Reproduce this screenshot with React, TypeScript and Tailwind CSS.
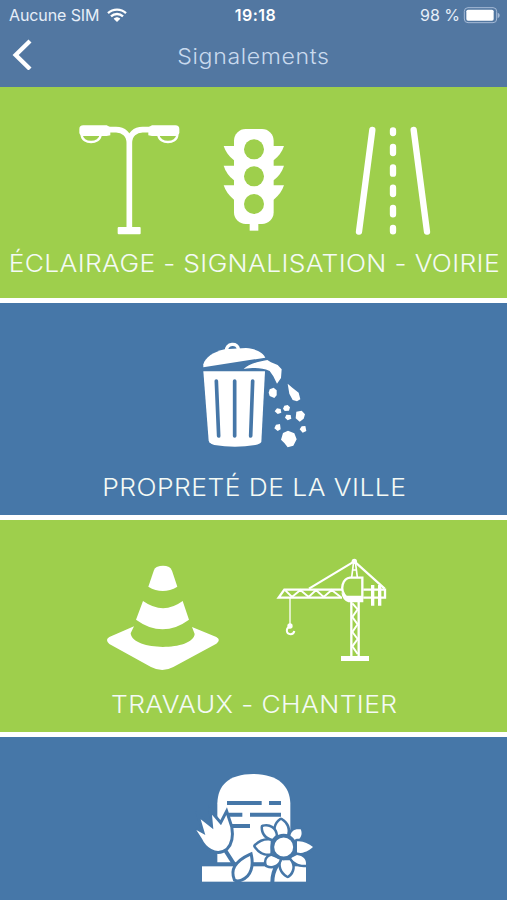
import React from 'react';

function WifiIcon() {
  return (
    <svg className="h-[15px] w-[20px]" viewBox="0 0 60 45" fill="none" stroke="#fff" strokeWidth="7">
      <path d="M3 15.500C18 1.500 42 1.500 57 15.500" />
      <path d="M12 25C22 15.500 38 15.500 48 25" />
      <path d="M20 32.500C26 26.500 34 26.500 40 32.500L30 42Z" fill="#fff" stroke="none" />
    </svg>
  );
}

function BatteryIcon() {
  return (
    <svg className="h-[18px] w-[38px]" viewBox="0 0 114 54">
      <rect x="4" y="5" width="97" height="45" rx="11" fill="none" stroke="#a5bad6" strokeWidth="3" />
      <rect x="10" y="11" width="82" height="33" rx="5" fill="#fff" />
      <path d="M104 20c8 2 8 14 0 16z" fill="#a5bad6" />
    </svg>
  );
}

function StreetLampIcon() {
  return (
    <svg className="h-[130px] w-[120px]" viewBox="0 0 360 390">
      <g fill="none" stroke="#fff">
        <path d="M178 345V84C178 58 160 44 138 44H114M178 84C178 58 196 44 218 44H242" strokeWidth="17" />
        <path d="M35 60C36 88 90 88 92 60M265 60C267 88 321 88 322 60" strokeWidth="7" />
      </g>
      <path d="M40 31H110L121 37V61L110 63H40Q28 63 28 52V42Q28 31 40 31Z" fill="#fff" />
      <path d="M316 31H246L235 37V61L246 63H316Q328 63 328 52V42Q328 31 316 31Z" fill="#fff" />
      <rect x="143" y="336" width="69" height="22" rx="3" fill="#fff" />
    </svg>
  );
}

function TrafficLightIcon() {
  return (
    <svg className="h-[130px] w-[90px]" viewBox="0 0 270 390" fill="#fff">
      <rect x="72" y="42" width="119" height="285" rx="35" />
      <path d="M41 93H222Q214 118 191 136H72Q49 118 41 93Z" />
      <path d="M41 152H222Q214 178 191 196H72Q49 178 41 152Z" />
      <path d="M41 211H222Q214 236 191 254H72Q49 236 41 211Z" />
      <rect x="119" y="320" width="26" height="27" />
      <g fill="#9ecf4c">
        <circle cx="132" cy="103" r="30" />
        <circle cx="132" cy="184" r="30" />
        <circle cx="132" cy="267" r="30" />
      </g>
    </svg>
  );
}

function RoadIcon() {
  return (
    <svg className="h-[130px] w-[100px]" viewBox="0 0 300 390" fill="none" stroke="#fff" strokeLinecap="round">
      <path d="M82 45L42 350M206 45L246 350" strokeWidth="19" />
      <path d="M144 46V54M144 96V114M144 157V176M144 218V237M144 279V298M144 339V349" strokeWidth="19" />
    </svg>
  );
}

function TrashIcon() {
  return (
    <svg className="h-[120px] w-[125px]" viewBox="0 0 375 360" fill="#fff">
      <path d="M37 97V88C42 68 68 50 101 43L165 39C198 42 216 53 223 68Z" />
      <path d="M106 50C102 24 143 20 142 45" fill="none" stroke="#fff" strokeWidth="10" />
      <path d="M37 109H222L211 321Q207 327 193 330Q132 340 70 330Q56 326 53 317Z" />
      <g stroke="#4677a8" strokeWidth="11" strokeLinecap="round">
        <path d="M76 138L83 303M131 138V303M185 138L179 303" />
      </g>
      <path d="M158 102C172 88 195 81 229 75L240 82L260 90L272 103L270 129L258 146L247 124L236 108C211 97 188 98 158 102Z" />
      <path d="M236 163L248 158L257 166L257 181L250 189L236 183L233 173Z" />
      <path d="M290 146L304 158L323 173L328 193L318 199L305 195L295 176Z" />
      <path d="M280 212L290 210L297 217L294 227L281 228L276 221Z" />
      <path d="M258 220L269 222L271 233L260 237L251 229Z" />
      <path d="M286 239L299 240L301 251L290 256L282 248Z" />
      <path d="M316 230L332 227L342 238L338 251L326 260L314 250Z" />
      <path d="M255 269L267 267L269 283L260 288L250 280Z" />
      <path d="M332 274L343 273L346 288L335 293L326 283Z" />
      <path d="M276 294L291 287L310 295L317 313L307 332L290 337L280 324L270 314Z" />
    </svg>
  );
}

function ConeIcon() {
  return (
    <svg className="h-[120px] w-[125px]" viewBox="0 0 375 360" fill="#fff">
      <path d="M170 36Q190 29 207 36Q213 39 216 47L232 95Q188 121 145 95L162 45Q165 39 170 36Z" />
      <path d="M129 138Q190 181 248 138L267 194Q188 252 108 194Z" />
      <path d="M102 214L28 246Q14 254 28 267L153 336Q187 354 220 336L349 266Q364 254 349 246L276 216L284 237C280 288 98 290 92 235Z" />
    </svg>
  );
}

function CraneIcon() {
  return (
    <svg className="h-[120px] w-[125px]" viewBox="0 0 375 360" fill="none" stroke="#fff">
      <path d="M117 116L253 34L344 116" strokeWidth="6.500" strokeLinejoin="round" />
      <path d="M216 143H26L43 119H216M280 119H345V143H280" strokeWidth="7" />
      <path d="M46 121L66 141L91 120L116 141L138 120L161 141L185 120L212 141" strokeWidth="6" />
      <path d="M308 105V167M329 105V167" strokeWidth="10" />
      <path d="M251 35L245 82M256 35L262 82M249 60H260" strokeWidth="5" />
      <circle cx="253" cy="34" r="8" fill="#fff" stroke="none" />
      <path d="M277 83V141H229C218 130 214 119 218 104Q224 84 240 83Z" strokeWidth="7" />
      <path d="M214 127L233 142H280V157H235Q217 151 214 127Z" fill="#fff" stroke="none" />
      <path d="M244 156V320M266 156V320" strokeWidth="7" />
      <path d="M247 160L263 178L247 201L263 223L247 246L263 267L247 289L263 312" strokeWidth="6" />
      <rect x="213" y="318" width="84" height="15" fill="#fff" stroke="none" />
      <path d="M60 144V224" strokeWidth="4" />
      <circle cx="60" cy="228" r="8" fill="#fff" stroke="none" />
      <path d="M60 231C47 233 47 252 62 253Q71 252 73 243" strokeWidth="6" />
    </svg>
  );
}

function CemeteryIcon() {
  return (
    <svg className="h-[125px] w-[130px]" viewBox="0 0 390 375" fill="#fff">
      <path d="M82 292V115C84 60 115 28 190 27C266 28 299 63 301 115V292Z" />
      <rect x="36" y="304" width="312" height="46" />
      <path d="M111 114H215M237 114H273M115 149H157M180 149H273M115 183H180" stroke="#4677a8" strokeWidth="12" />
      <path d="M105 255L135 302" stroke="#4677a8" strokeWidth="12" />
      {/* tulip */}
      <path
        d="M19 195L46 210L32 163L70 193L66 149L93 181L109 150L121 187Q128 229 108 249Q88 265 64 252Q45 241 36 221Z"
        stroke="#4677a8"
        strokeWidth="18"
        paintOrder="stroke"
      />
      {/* leaf */}
      <path
        d="M180 273C186 301 180 331 153 341Q143 345 137 342Q129 322 138 306Q151 286 180 273Z"
        stroke="#4677a8"
        strokeWidth="18"
        paintOrder="stroke"
      />
      <path d="M191 298H242" fill="none" stroke="#4677a8" strokeWidth="9" />
      {/* daisy */}
      <path d="M262 300Q247 322 247 352" fill="none" stroke="#4677a8" strokeWidth="12" />
      <g stroke="#4677a8" strokeWidth="15" strokeLinejoin="round" paintOrder="stroke">
        <path d="M261 213C253 194 257 176 273 165C290 176 297 193 290 212Z" />
        <path d="M301 214C302 198 314 190 332 193C339 208 332 222 318 230Z" />
        <path d="M321 229C339 227 355 235 369 246C356 258 339 266 321 264Z" />
        <path d="M321 270C339 273 349 281 348 299C329 302 311 292 303 279Z" />
        <path d="M299 286C311 299 310 320 293 332C275 322 268 302 275 286Z" />
        <path d="M269 283C266 298 249 308 231 300C226 287 231 277 244 273Z" />
        <path d="M241 265C222 268 209 260 197 243C210 230 225 224 242 227Z" />
        <path d="M247 221C229 217 219 204 219 186C239 180 255 193 257 211Z" />
      </g>
      <circle cx="281" cy="246" r="34" stroke="#4677a8" strokeWidth="11" />
    </svg>
  );
}

interface LabelProps {
  children: React.ReactNode;
  className?: string;
}

function Label({ children, className = '' }: LabelProps) {
  return (
    <h2 className={`flex h-9 items-center justify-center whitespace-nowrap pt-[2px] text-[24px] font-light leading-9 text-[#f4faf5] ${className}`}>
      <span className="scale-x-110">{children}</span>
    </h2>
  );
}

function App() {
  return (
    <div className="h-[900px] w-full overflow-hidden bg-white font-[Inter,sans-serif]">
      <header className="h-[87px] bg-[#5277a1]">
        <div className="grid h-[30px] grid-cols-3 items-center text-[16px] leading-[30px] text-[#e6eef8]">
          <div className="flex items-center gap-2 pl-[9px]">
            <span className="whitespace-nowrap tracking-[-0.1px]">Aucune SIM</span>
            <WifiIcon />
          </div>
          <span className="pl-[4px] text-center font-semibold tracking-[0.5px] text-white">19:18</span>
          <div className="flex items-center justify-end gap-[3px] pr-[6px]">
            <span className="whitespace-nowrap">98 %</span>
            <BatteryIcon />
          </div>
        </div>
        <div className="grid h-[53px] grid-cols-[60px_1fr_60px] items-center">
          <button aria-label="Retour" className="pb-[5px] pl-[12px]">
            <svg className="h-[32px] w-[21px]" viewBox="0 0 63 96" fill="none" stroke="#fff" strokeWidth="13">
              <path d="M54 9L11 51L54 93" />
            </svg>
          </button>
          <h1 className="text-center text-[22px] font-light text-[#c9daee]">
            <span className="inline-block scale-x-105 tracking-[0.6px]">Signalements</span>
          </h1>
        </div>
      </header>

      <main className="flex flex-col gap-[5px]">
        <section className="h-[211px] bg-[#9ecf4c] pt-7">
          <div className="flex pl-[70px]">
            <StreetLampIcon />
            <div className="ml-5">
              <TrafficLightIcon />
            </div>
            <div className="ml-[45px]">
              <RoadIcon />
            </div>
          </div>
          <Label className="pl-[2px] tracking-[0.32px]">ÉCLAIRAGE - SIGNALISATION - VOIRIE</Label>
        </section>

        <section className="h-[212px] bg-[#4677a8] pt-8">
          <div className="flex h-[134px] justify-center">
            <TrashIcon />
          </div>
          <Label className="pl-[2px] tracking-[0.43px]">PROPRETÉ DE LA VILLE</Label>
        </section>

        <section className="h-[212px] bg-[#9ecf4c] pt-[30px]">
          <div className="flex h-[136px] gap-[45px] pl-[100px]">
            <div className="pt-[5px]">
              <ConeIcon />
            </div>
            <CraneIcon />
          </div>
          <Label className="pl-[2px] tracking-[0.37px]">TRAVAUX - CHANTIER</Label>
        </section>

        <section className="h-[212px] bg-[#4677a8] pt-7">
          <div className="flex justify-center pl-[3px]">
            <CemeteryIcon />
          </div>
        </section>
      </main>
    </div>
  );
}

export default App;
